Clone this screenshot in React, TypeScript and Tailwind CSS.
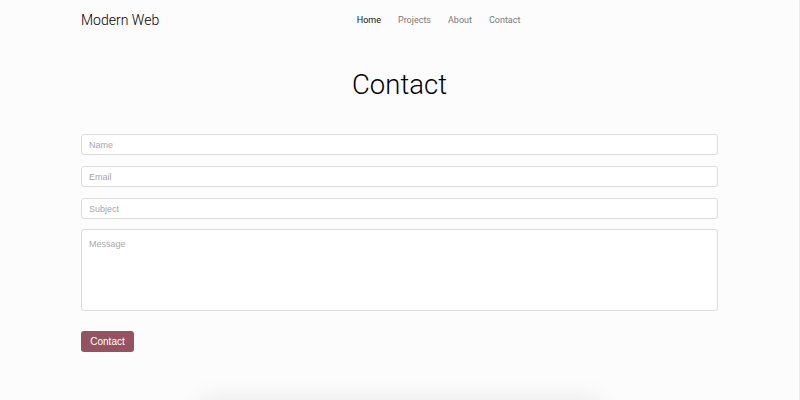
import React from "react";

const navLinks = ["Home", "Projects", "About", "Contact"];

export default function App() {
  return (
    <div className="flex h-[400px] w-full overflow-hidden bg-[#fcfcfc]">
      <div className="flex-1">
        {/* header */}
        <div className="mx-auto w-[637px] h-[41px] flex items-center justify-between">
          <div className="text-[14px] font-light text-black font-['Roboto',sans-serif]">
            Modern Web
          </div>
          <nav className="flex gap-[17px] text-[9px] font-['Roboto',sans-serif]">
            {navLinks.map((l, i) => (
              <span key={l} className={i === 0 ? "text-[#111]" : "text-[#7a7a7a]"}>
                {l}
              </span>
            ))}
          </nav>
          <div />
        </div>

        {/* title */}
        <h1 className="mt-[24px] text-center text-[27.5px] font-light leading-[40px] text-black font-['Roboto',sans-serif]">
          Contact
        </h1>

        {/* form */}
        <div className="mx-auto mt-[29px] w-[637px] flex flex-col gap-[11px] font-['Liberation_Sans',Arial,sans-serif]">
          <input
            placeholder="Name"
            className="h-[21px] rounded-[3px] border border-[#dcdcdc] bg-white px-[7px] text-[9px] placeholder:text-[#a8a8a8] outline-none"
          />
          <input
            placeholder="Email"
            className="h-[21px] rounded-[3px] border border-[#dcdcdc] bg-white px-[7px] text-[9px] placeholder:text-[#a8a8a8] outline-none"
          />
          <input
            placeholder="Subject"
            className="h-[21px] rounded-[3px] border border-[#dcdcdc] bg-white px-[7px] text-[9px] placeholder:text-[#a8a8a8] outline-none"
          />
          <textarea
            placeholder="Message"
            className="-mt-px h-[82px] resize-none rounded-[3px] border border-[#dcdcdc] bg-white px-[7px] pt-[8px] text-[9px] placeholder:text-[#a8a8a8] outline-none"
          />
          <div className="mt-[6px]">
            <button className="h-[21px] w-[53px] rounded-[3px] bg-[#955362] text-[10px] text-white">
              Contact
            </button>
          </div>
        </div>

        {/* card peeking at bottom */}
        <div className="mx-auto mt-[48px] h-[60px] w-[400px] bg-[#fcfcfc] shadow-[0_0_24px_rgba(0,0,0,0.09)]" />
      </div>
      <div className="w-px bg-[#ececec]" />
    </div>
  );
}
